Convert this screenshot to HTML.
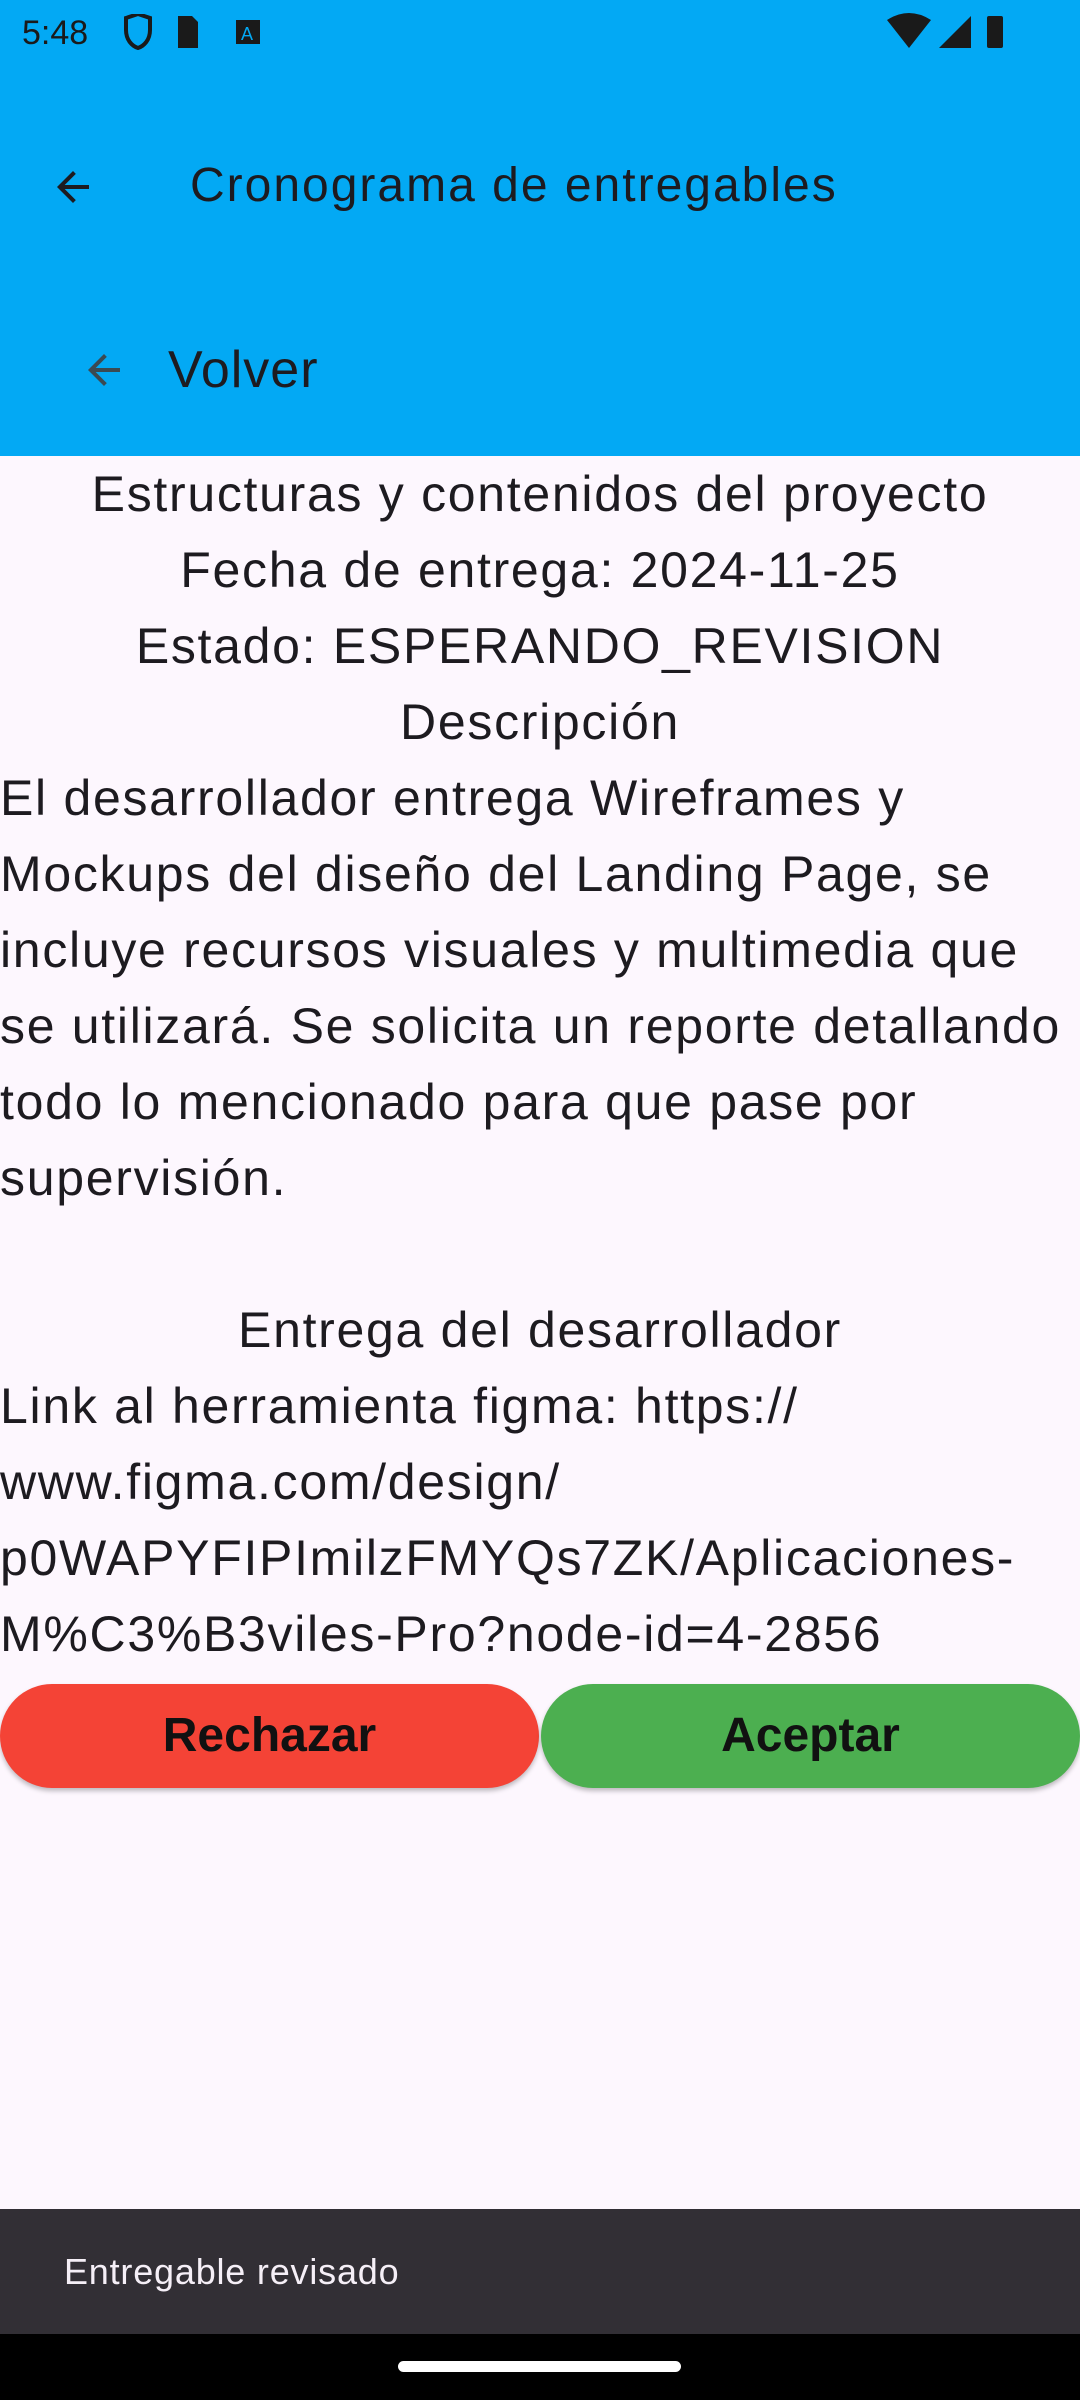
<!DOCTYPE html>
<html><head><meta charset="utf-8"><style>
*{margin:0;padding:0;box-sizing:border-box}
body{width:1080px;height:2400px;background:#fdf7fe;font-family:"Liberation Sans",sans-serif;position:relative;overflow:hidden;color:#1d1b20}
.bar{position:absolute;left:0;top:0;width:1080px;height:456px;background:#03a9f4}
.st{position:absolute;top:14px;left:22px;font-size:34px;color:#1a1a1a}
.t{position:absolute;left:190px;top:158px;font-size:48px;letter-spacing:2px;color:#1d1b20;white-space:nowrap}
.v{position:absolute;left:168px;top:340px;font-size:52px;letter-spacing:1px;color:#1d1b20}
.body{position:absolute;left:0;top:456px;width:1080px;font-size:50px;letter-spacing:1.7px;line-height:76px;white-space:nowrap}
.c{text-align:center}
.btn{position:absolute;top:1684px;height:104px;border-radius:52px;font-weight:bold;font-size:48px;text-align:center;line-height:104px;color:#111;box-shadow:0 3px 5px rgba(0,0,0,.25)}
.snack{position:absolute;left:0;top:2209px;width:1080px;height:125px;background:#322f35;color:#f5eff7;font-size:36px;letter-spacing:0.8px;line-height:125px;padding-left:64px}
.nav{position:absolute;left:0;top:2334px;width:1080px;height:66px;background:#000}
.pill{position:absolute;left:398px;top:2361px;width:283px;height:11px;border-radius:6px;background:#fff}
</style></head><body>
<div class="bar"></div>
<div class="st">5:48</div>
<svg style="position:absolute;left:118px;top:14px" width="150" height="36" viewBox="0 0 150 36">
<path d="M8 4 L20 0 L32 4 V16 C32 26 26 32 20 34 C14 32 8 26 8 16Z" fill="none" stroke="#1a1a1a" stroke-width="4"/>
<path d="M60 2 H74 L80 8 V34 H60Z" fill="#1a1a1a"/>
<rect x="118" y="6" width="24" height="24" fill="#1a1a1a"/><text x="123" y="26" font-size="18" fill="#03a9f4" font-family="Liberation Sans">A</text>
</svg>
<svg style="position:absolute;left:885px;top:12px" width="130" height="40" viewBox="0 0 130 40">
<path d="M2 8 Q24 -6 46 8 L24 36Z" fill="#1a1a1a"/>
<path d="M86 4 V36 H54Z" fill="#1a1a1a"/>
<rect x="102" y="4" width="16" height="32" rx="2" fill="#1a1a1a"/>
</svg>
<svg style="position:absolute;left:49px;top:163px" width="48" height="48" viewBox="0 0 24 24"><path d="M20 11H7.83l5.59-5.59L12 4l-8 8 8 8 1.41-1.41L7.83 13H20v-2z" fill="#1d1b20"/></svg>
<div class="t">Cronograma de entregables</div>
<svg style="position:absolute;left:80px;top:346px" width="48" height="48" viewBox="0 0 24 24"><path d="M20 11H7.83l5.59-5.59L12 4l-8 8 8 8 1.41-1.41L7.83 13H20v-2z" fill="#3b4a52"/></svg>
<div class="v">Volver</div>
<div class="body">
<div class="c">Estructuras y contenidos del proyecto</div>
<div class="c">Fecha de entrega: 2024-11-25</div>
<div class="c">Estado: ESPERANDO_REVISION</div>
<div class="c">Descripción</div>
<div>El desarrollador entrega Wireframes y</div>
<div>Mockups del diseño del Landing Page, se</div>
<div>incluye recursos visuales y multimedia que</div>
<div>se utilizará. Se solicita un reporte detallando</div>
<div>todo lo mencionado para que pase por</div>
<div>supervisión.</div>
<div>&nbsp;</div>
<div class="c">Entrega del desarrollador</div>
<div>Link al herramienta figma: https://</div>
<div>www.figma.com/design/</div>
<div>p0WAPYFIPImilzFMYQs7ZK/Aplicaciones-</div>
<div>M%C3%B3viles-Pro?node-id=4-2856</div>
</div>
<div class="btn" style="left:0;width:539px;background:#f44336">Rechazar</div>
<div class="btn" style="left:541px;width:539px;background:#4caf50">Aceptar</div>
<div class="snack">Entregable revisado</div>
<div class="nav"></div><div class="pill"></div>
</body></html>
